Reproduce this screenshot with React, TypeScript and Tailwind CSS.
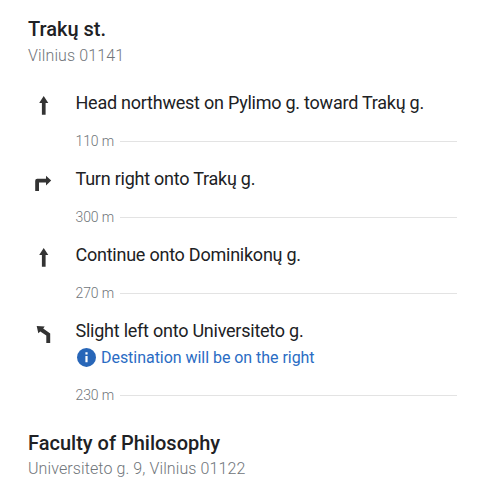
import React from 'react';

const UP = 'M10.700 2 6.200 9h2.700v11.700h3.700V9h2.700z';
const RIGHT = 'M13 5.700v3H4.200Q2.200 8.700 2.200 10.700V21H6V12.500h7v2.900L18.200 10.600z';
const SLIGHT_LEFT = 'M3.700 4l1.600 7.200 2-1.800 6 4V21h3.900V11.500L10.200 6.400l1.500-1.800z';

const steps = [
  { icon: UP, text: 'Head northwest on Pylimo g. toward Trakų g.', distance: '110 m' },
  { icon: RIGHT, text: 'Turn right onto Trakų g.', distance: '300 m' },
  { icon: UP, text: 'Continue onto Dominikonų g.', distance: '270 m' },
  { icon: SLIGHT_LEFT, text: 'Slight left onto Universiteto g.', distance: '230 m', note: 'Destination will be on the right' },
];

const App = () => {
  return (
    <main className="h-[504px] w-[482px] bg-white px-7 pt-4 font-['Roboto',sans-serif] text-[#202124]">
      <h2 className="h-[26px] text-xl leading-[26px] font-medium">Trakų st.</h2>
      <p className="h-[26px] text-base leading-[27px] font-light tracking-[0.13px] text-[#70757a]">Vilnius 01141</p>

      <ol className="mt-[22px]">
        {steps.map((step) => (
          <li key={step.text} className="flex">
            <svg className="mt-[4px] ml-[5px] h-[22px] w-[22px] shrink-0" viewBox="0 0 22 22" fill="#333">
              <path d={step.icon} />
            </svg>
            <div className="ml-[20.500px] w-[381.500px] shrink-0">
              <div className="h-[26px] text-lg leading-[26px] tracking-[-0.24px]">{step.text}</div>
              {step.note && (
                <div className="flex h-[26px] items-center text-base leading-[28px] text-[#2866b8]">
                  <svg className="mr-[3.500px] h-[22px] w-[22px]" viewBox="0 0 22 22" fill="#2866b8">
                    <circle cx="10.500" cy="11.400" r="9.500" />
                    <path d="M9.400 10h2.200v6.300H9.400zM9.400 6.300h2.200v2.300H9.400z" fill="#fff" />
                  </svg>
                  <span className="pt-0.5 tracking-[-0.04px] text-[#2a6cc4]">{step.note}</span>
                </div>
              )}
              <div className="flex h-[50px] items-center text-sm font-light text-[#70757a]">
                <span className="mr-[6px] tracking-[-0.1px]">{step.distance}</span>
                <span className="h-px grow bg-[#e3e3e3]" />
              </div>
            </div>
          </li>
        ))}
      </ol>

      <h2 className="mt-[10px] h-[26px] text-xl leading-[26px] font-medium">Faculty of Philosophy</h2>
      <p className="h-[25px] text-base leading-[25px] font-light tracking-[0.1px] text-[#70757a]">Universiteto g. 9, Vilnius 01122</p>
    </main>
  );
};

export default App;
